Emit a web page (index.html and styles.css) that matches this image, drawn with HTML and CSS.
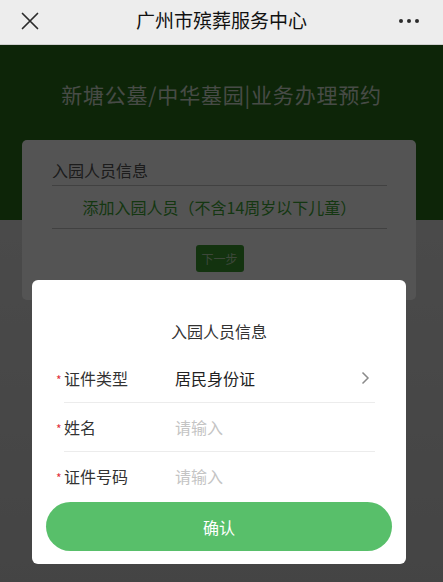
FILE: index.html
```html
<!DOCTYPE html>
<html lang="zh-CN">
<head>
<meta charset="utf-8">
<title>广州市殡葬服务中心</title>
<link rel="stylesheet" href="styles.css">
</head>
<body>
<header class="nav">
  <span class="nav-close">
    <svg width="18" height="18" viewBox="0 0 18 18"><path d="M1.5 1.5 L16.5 16.5 M16.5 1.5 L1.5 16.5" stroke="#2b2b2b" stroke-width="1.7" fill="none" stroke-linecap="round"/></svg>
  </span>
  <h1 class="nav-title">广州市殡葬服务中心</h1>
  <span class="nav-more"><i></i><i></i><i></i></span>
</header>
<main class="page">
  <section class="banner">
    <h2 class="banner-title">新塘公墓/中华墓园|业务办理预约</h2>
  </section>
  <section class="card">
    <div class="card-head">入园人员信息</div>
    <div class="card-add">添加入园人员（不含14周岁以下儿童）</div>
    <div class="card-actions"><button class="btn-next">下一步</button></div>
  </section>
</main>
<div class="mask"></div>
<div class="dialog">
  <div class="dialog-title">入园人员信息</div>
  <div class="form">
    <div class="row">
      <span class="req">*</span><span class="label">证件类型</span>
      <span class="value">居民身份证</span>
      <svg class="chev" width="9" height="14" viewBox="0 0 9 14"><path d="M1.5 1.5 L7 7 L1.5 12.5" stroke="#8a8a8a" stroke-width="1.5" fill="none"/></svg>
    </div>
    <div class="row">
      <span class="req">*</span><span class="label">姓名</span>
      <span class="value placeholder">请输入</span>
    </div>
    <div class="row last">
      <span class="req">*</span><span class="label">证件号码</span>
      <span class="value placeholder">请输入</span>
    </div>
  </div>
  <button class="btn-confirm">确认</button>
</div>
</body>
</html>
```
FILE: styles.css
```css
* { box-sizing: border-box; }
html, body { margin: 0; padding: 0; }
body {
  width: 443px;
  height: 582px;
  overflow: hidden;
  font-family: "Noto Sans CJK SC", "Noto Sans", sans-serif;
  background: #e4e4e4;
  position: relative;
}
.nav {
  height: 45px;
  background: #ededed;
  border-bottom: 1px solid #cfcfcf;
  display: flex;
  align-items: center;
  justify-content: space-between;
  padding: 0 24px 2px 21px;
  position: relative;
}
.nav-close { display: flex; width: 18px; height: 18px; }
.nav-title {
  position: absolute;
  left: 0; right: 0;
  top: 0;
  margin: 0;
  text-align: center;
  font-size: 19px;
  line-height: 40px;
  font-weight: 400;
  color: #111;
}
.nav-more { display: flex; gap: 4px; }
.nav-more i {
  width: 4px; height: 4px; border-radius: 50%;
  background: #2b2b2b; display: block;
}
.page {
  background: linear-gradient(#e8e8e8, #cfcfcf);
  height: 537px;
}
.banner {
  background: #28701a;
  height: 175px;
  padding-top: 34px;
}
.banner-title {
  margin: 0;
  text-align: center;
  font-size: 21px;
  line-height: 30px;
  font-weight: 400;
  color: rgba(255, 255, 255, 0.82);
  letter-spacing: 0.8px;
}
.card {
  margin: -80px 27px 0 22px;
  background: #fff;
  border-radius: 5px;
  padding: 19px 29px 24px 30px;
  height: 160px;
}
.card-head {
  font-size: 16px;
  line-height: 22px;
  color: #555;
  padding-bottom: 4px;
  border-bottom: 1px solid #c4c4c4;
}
.card-add {
  height: 43px;
  line-height: 42px;
  text-align: center;
  font-size: 16px;
  color: #3fa634;
  border-bottom: 1px solid #c4c4c4;
}
.card-actions { display: flex; justify-content: center; padding-top: 16px; }
.btn-next {
  border: 0;
  background: #3a9a30;
  color: #b8d8b0;
  font-family: inherit;
  font-size: 12px;
  width: 48px;
  height: 27px;
  border-radius: 3px;
  padding: 0;
}
.mask {
  position: absolute;
  left: 0; right: 0; top: 45px; bottom: 0;
  background: rgba(0, 0, 0, 0.67);
}
.dialog {
  position: absolute;
  left: 32px;
  top: 280px;
  width: 374px;
  height: 284px;
  background: #fff;
  border-radius: 6px;
  padding: 40px 14px 13px;
  display: flex;
  flex-direction: column;
}
.dialog-title {
  text-align: center;
  font-size: 16px;
  line-height: 22px;
  color: #333;
  margin-bottom: 12px;
}
.form { padding: 0 17px 0 18px; }
.row {
  height: 49px;
  display: flex;
  align-items: center;
  border-bottom: 1px solid #ececec;
  font-size: 16px;
  color: #333;
}
.row.last { border-bottom: 0; height: 48px; }
.req {
  color: #e2323c;
  font-size: 12px;
  width: 7px;
  margin-left: -8px;
  margin-right: 1px;
  position: relative;
  top: 1px;
}
.label { width: 111px; }
.value { flex: 1; color: #222; }
.value.placeholder { color: #c4c4c4; }
.chev { margin-right: 5px; }
.btn-confirm {
  margin-top: 2px;
  height: 49px;
  border: 0;
  border-radius: 25px;
  background: #58bf6a;
  color: #fff;
  font-family: inherit;
  font-size: 16px;
  width: 100%;
}
```
